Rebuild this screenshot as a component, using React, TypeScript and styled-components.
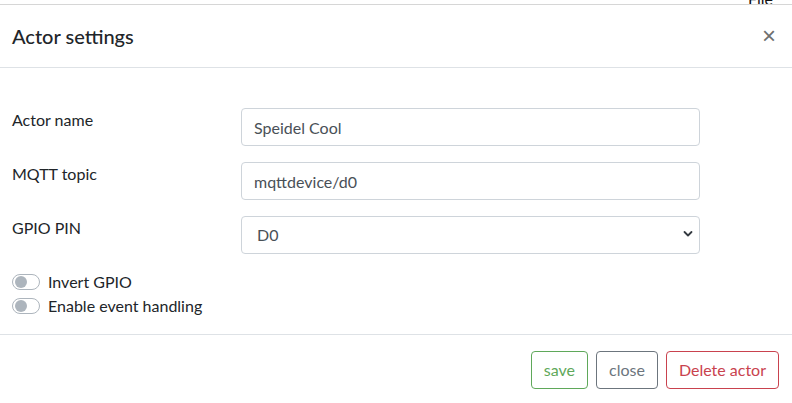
import React from "react";
import styled, { createGlobalStyle } from "styled-components";

const GlobalStyle = createGlobalStyle`
  html, body {
    margin: 0;
    padding: 0;
    background: #fff;
  }
  body {
    font-family: Lato, "Noto Sans", "Liberation Sans", sans-serif;
    font-size: 16px;
    line-height: 1.5;
    color: #212529;
  }
  * {
    box-sizing: border-box;
  }
`;

const Page = styled.div`
  width: 792px;
  height: 403px;
  overflow: hidden;
`;

// the app menu behind the dialog, only its lower edge shows
const BackStrip = styled.div`
  height: 4px;
  overflow: hidden;
  display: flex;
  justify-content: flex-end;
  padding-right: 19px;
`;

const BackMenu = styled.span`
  display: block;
  margin-top: -9px;
  font-size: 16px;
  line-height: 16px;
  color: #111;
`;

const Modal = styled.div`
  border-top: 1px solid #d6d6d6;
  background: #fff;
`;

const Header = styled.div`
  display: flex;
  align-items: center;
  justify-content: space-between;
  padding: 16px 12px;
  border-bottom: 1px solid #dee2e6;
`;

const Title = styled.h5`
  margin: 0;
  font-size: 20px;
  font-weight: 500;
  line-height: 30px;
`;

const CloseX = styled.button`
  border: 0;
  background: transparent;
  padding: 0;
  margin-right: 4px;
  font-family: "Liberation Sans", sans-serif;
  font-size: 24px;
  font-weight: 400;
  line-height: 1;
  color: #6f6f6f;
  cursor: pointer;
`;

const Body = styled.div`
  padding: 40px 12px 16px 12px;
`;

const FieldRow = styled.div`
  display: grid;
  grid-template-columns: 229px 459px;
  margin-bottom: 16px;
`;

const Label = styled.label`
  line-height: 24px;
`;

const TextInput = styled.input`
  height: 38px;
  width: 100%;
  padding: 6px 12px;
  font: inherit;
  color: #495057;
  border: 1px solid #ced4da;
  border-radius: 4px;
  outline: none;
`;

const SelectWrap = styled.div`
  position: relative;
`;

const Select = styled.select`
  appearance: none;
  height: 38px;
  width: 100%;
  padding: 6px 30px 6px 15px;
  font: inherit;
  color: #495057;
  background: #fff;
  border: 1px solid #ced4da;
  border-radius: 4px;
  outline: none;
`;

const Chevron = styled.svg`
  position: absolute;
  right: 7px;
  top: 14px;
  pointer-events: none;
`;

const SwitchRow = styled.label`
  display: flex;
  align-items: center;
  gap: 8px;
  line-height: 24px;
`;

const SwitchTrack = styled.span`
  position: relative;
  width: 28px;
  height: 16px;
  border: 1px solid #adb5bd;
  border-radius: 8px;
  background: #fff;
  flex-shrink: 0;

  &::after {
    content: "";
    position: absolute;
    left: 2px;
    top: 1px;
    width: 12px;
    height: 12px;
    border-radius: 50%;
    background: #adb5bd;
  }
`;

const Footer = styled.div`
  display: flex;
  justify-content: flex-end;
  gap: 8px;
  padding: 16px 13px 16px 12px;
  border-top: 1px solid #dee2e6;
`;

const OutlineButton = styled.button<{ $color: string }>`
  height: 38px;
  padding: 6px 12px;
  font: inherit;
  line-height: 24px;
  color: ${(p) => p.$color};
  background: #fff;
  border: 1px solid ${(p) => p.$color};
  border-radius: 4px;
  cursor: pointer;
`;

export default function App() {
  return (
    <Page>
      <GlobalStyle />
      <BackStrip>
        <BackMenu>File</BackMenu>
      </BackStrip>
      <Modal>
        <Header>
          <Title>Actor settings</Title>
          <CloseX aria-label="Close">×</CloseX>
        </Header>
        <Body>
          <FieldRow>
            <Label>Actor name</Label>
            <TextInput defaultValue="Speidel Cool" />
          </FieldRow>
          <FieldRow>
            <Label>MQTT topic</Label>
            <TextInput defaultValue="mqttdevice/d0" />
          </FieldRow>
          <FieldRow>
            <Label>GPIO PIN</Label>
            <SelectWrap>
              <Select defaultValue="D0">
                <option>D0</option>
                <option>D1</option>
                <option>D2</option>
              </Select>
              <Chevron width="10" height="8" viewBox="0 0 10 8">
                <path
                  d="M1.5 2 L5 5.5 L8.5 2"
                  fill="none"
                  stroke="#343a40"
                  strokeWidth="1.8"
                  strokeLinecap="round"
                  strokeLinejoin="round"
                />
              </Chevron>
            </SelectWrap>
          </FieldRow>
          <SwitchRow>
            <SwitchTrack />
            Invert GPIO
          </SwitchRow>
          <SwitchRow>
            <SwitchTrack />
            Enable event handling
          </SwitchRow>
        </Body>
        <Footer>
          <OutlineButton $color="#5fa85a">save</OutlineButton>
          <OutlineButton $color="#6c757d">close</OutlineButton>
          <OutlineButton $color="#c9424e">Delete actor</OutlineButton>
        </Footer>
      </Modal>
    </Page>
  );
}
